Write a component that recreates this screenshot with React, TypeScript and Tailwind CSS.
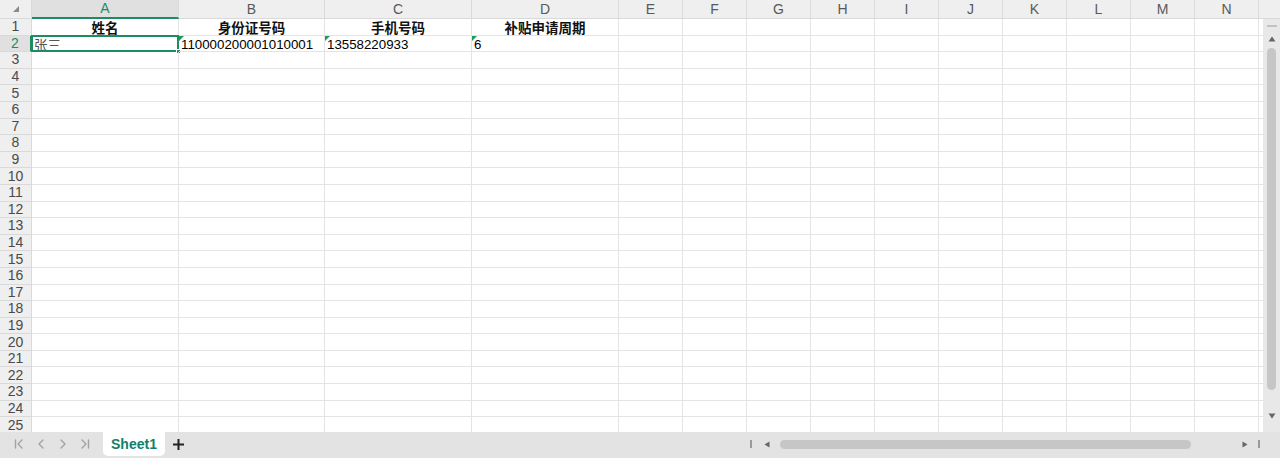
import React from "react";

const colWidths = [147, 146, 147, 147, 64, 64, 64, 64, 64, 64, 64, 64, 64, 64];
const letters = ["A", "B", "C", "D", "E", "F", "G", "H", "I", "J", "K", "L", "M", "N"];
const rows = Array.from({ length: 25 }, (_, i) => i + 1);

function Corner() {
  return (
    <div className="w-[32px] h-[19px] shrink-0 bg-[#efefef] border-r border-b border-[#d9d9d9] flex items-center justify-center">
      <svg width="8" height="8" viewBox="0 0 8 8">
        <polygon points="7,1 7,7 1,7" fill="#8a8a8a" />
      </svg>
    </div>
  );
}

function TextMark() {
  return (
    <svg className="absolute left-0 top-0" width="5" height="5" viewBox="0 0 5 5">
      <polygon points="0,0 5,0 0,5" fill="#1e9a5a" />
    </svg>
  );
}

function Cell({ r, c }: { r: number; c: number }) {
  const w = colWidths[c];
  let content: React.ReactNode = null;
  const header = ["姓名", "身份证号码", "手机号码", "补贴申请周期"];
  if (r === 1 && c < 4) {
    content = (
      <div className="w-full text-center font-bold text-[13.5px] leading-[16px] text-[#111] font-['Noto_Sans_CJK_SC',serif] pt-[1px]">
        {header[c]}
      </div>
    );
  }
  if (r === 2) {
    if (c === 0)
      content = (
        <div className="pl-[2px] pt-[2px] text-[13.5px] leading-[16px] text-[#555] font-['Noto_Sans_CJK_SC',sans-serif]">张三</div>
      );
    if (c === 1)
      content = <div className="pl-[2px] text-[13.3px] leading-[16px] text-black whitespace-nowrap pt-[3px]">110000200001010001</div>;
    if (c === 2)
      content = <div className="pl-[2px] text-[13.3px] leading-[16px] text-black pt-[3px]">13558220933</div>;
    if (c === 3) content = <div className="pl-[2px] text-[13.3px] leading-[16px] text-black pt-[3px]">6</div>;
  }
  return (
    <div
      className="relative shrink-0 h-full border-r border-b border-[#e4e4e4] flex items-center overflow-visible"
      style={{ width: w }}
    >
      {r === 2 && c >= 1 && c <= 3 && <TextMark />}
      {content}
      {r === 2 && c === 0 && (
        <>
          <div className="absolute left-[-1px] top-[-1px] right-[-1px] bottom-[-1px] border-2 border-[#1d8c60] pointer-events-none" />
          <div className="absolute right-[-3px] bottom-[-3px] w-[5px] h-[5px] bg-[#1d8c60] border border-white" />
        </>
      )}
    </div>
  );
}

function NavIcon({ kind }: { kind: "first" | "prev" | "next" | "last" }) {
  return (
    <svg width="12" height="12" viewBox="0 0 12 12" fill="none" stroke="#a3a3a3" strokeWidth="1.4" strokeLinecap="round" strokeLinejoin="round">
      {kind === "first" && (
        <>
          <line x1="2.5" y1="2" x2="2.5" y2="10" />
          <polyline points="9,2 5,6 9,10" />
        </>
      )}
      {kind === "prev" && <polyline points="8,2 4,6 8,10" />}
      {kind === "next" && <polyline points="4,2 8,6 4,10" />}
      {kind === "last" && (
        <>
          <polyline points="3,2 7,6 3,10" />
          <line x1="9.5" y1="2" x2="9.5" y2="10" />
        </>
      )}
    </svg>
  );
}

export default function App() {
  return (
    <div className="w-[1280px] h-[458px] bg-white overflow-hidden flex flex-col font-['Liberation_Sans',Arial,sans-serif]">
      <div className="flex h-[432px] shrink-0">
        {/* Grid */}
        <div className="w-[1263px] flex flex-col overflow-hidden">
          {/* header row */}
          <div className="flex h-[19px] shrink-0 bg-[#efefef]">
            <Corner />
            {letters.map((l, i) => (
              <div
                key={l}
                className={
                  i === 0
                    ? "shrink-0 h-[19px] bg-[#e0e0e0] border-r border-[#d9d9d9] border-b-2 border-b-[#1d8c60] flex items-center justify-center text-[14px] text-[#1d8c60]"
                    : "shrink-0 h-[19px] border-r border-b border-[#d9d9d9] flex items-center justify-center text-[14px] text-[#595959]"
                }
                style={{ width: colWidths[i] }}
              >
                {l}
              </div>
            ))}
            <div className="flex-1 h-[19px] border-b border-[#d9d9d9]" />
          </div>
          {rows.map((r) => (
            <div key={r} className="flex h-[16.6px] shrink-0">
              <div
                className={
                  r === 2
                    ? "w-[32px] shrink-0 h-full bg-[#e0e0e0] border-r-2 border-r-[#1d8c60] border-b border-b-[#d9d9d9] flex items-center justify-center text-[14px] text-[#1d8c60]"
                    : "w-[32px] shrink-0 h-full bg-[#efefef] border-r border-b border-[#d9d9d9] flex items-center justify-center text-[14px] text-[#4a4a4a]"
                }
              >
                {r}
              </div>
              {colWidths.map((_, c) => (
                <Cell key={c} r={r} c={c} />
              ))}
              <div className="flex-1 h-full border-b border-[#e4e4e4]" />
            </div>
          ))}
        </div>
        {/* vertical scrollbar */}
        <div className="w-[17px] flex flex-col bg-[#efefef]">
          <div className="h-[19px] shrink-0 border-b border-[#d9d9d9]" />
          <div className="flex-1 bg-[#e8e8e8] flex flex-col items-center">
            <div className="w-[10px] h-[2px] bg-[#c2c2c2] mt-[6px]" />
            <svg className="mt-[9px]" width="8" height="6" viewBox="0 0 8 6">
              <polygon points="4,0.5 7.5,5.5 0.5,5.5" fill="#666" />
            </svg>
            <div className="w-[9px] h-[342px] mt-[6px] rounded-full bg-[#c6c6c6]" />
            <svg className="mt-[23px]" width="8" height="6" viewBox="0 0 8 6">
              <polygon points="0.5,0.5 7.5,0.5 4,5.5" fill="#666" />
            </svg>
          </div>
        </div>
      </div>
      {/* tab bar */}
      <div className="h-[26px] shrink-0 bg-[#e3e3e3] flex items-start">
        <div className="flex items-center h-[24px] pl-[13px] gap-[10px]">
          <NavIcon kind="first" />
          <NavIcon kind="prev" />
          <NavIcon kind="next" />
          <NavIcon kind="last" />
        </div>
        <div className="ml-[12px] w-[62px] h-[24px] bg-white rounded-b-[5px] flex items-center justify-center text-[14px] font-bold text-[#11806a]">
          Sheet1
        </div>
        <div className="ml-[8px] h-[24px] flex items-center">
          <svg width="11" height="11" viewBox="0 0 11 11">
            <rect x="4.5" y="0" width="2" height="11" fill="#222" />
            <rect x="0" y="4.5" width="11" height="2" fill="#222" />
          </svg>
        </div>
        <div className="ml-[566px] h-[24px] flex items-center">
          <div className="w-[2px] h-[8px] bg-[#9a9a9a]" />
          <svg className="ml-[12px]" width="6" height="7" viewBox="0 0 6 7">
            <polygon points="5.5,0.5 5.5,6.5 0.5,3.5" fill="#666" />
          </svg>
          <div className="ml-[10px] w-[411px] h-[9px] rounded-full bg-[#c6c6c6]" />
          <svg className="ml-[51px]" width="6" height="7" viewBox="0 0 6 7">
            <polygon points="0.5,0.5 0.5,6.5 5.5,3.5" fill="#666" />
          </svg>
          <div className="ml-[10px] w-[2px] h-[8px] bg-[#9a9a9a]" />
        </div>
      </div>
    </div>
  );
}
